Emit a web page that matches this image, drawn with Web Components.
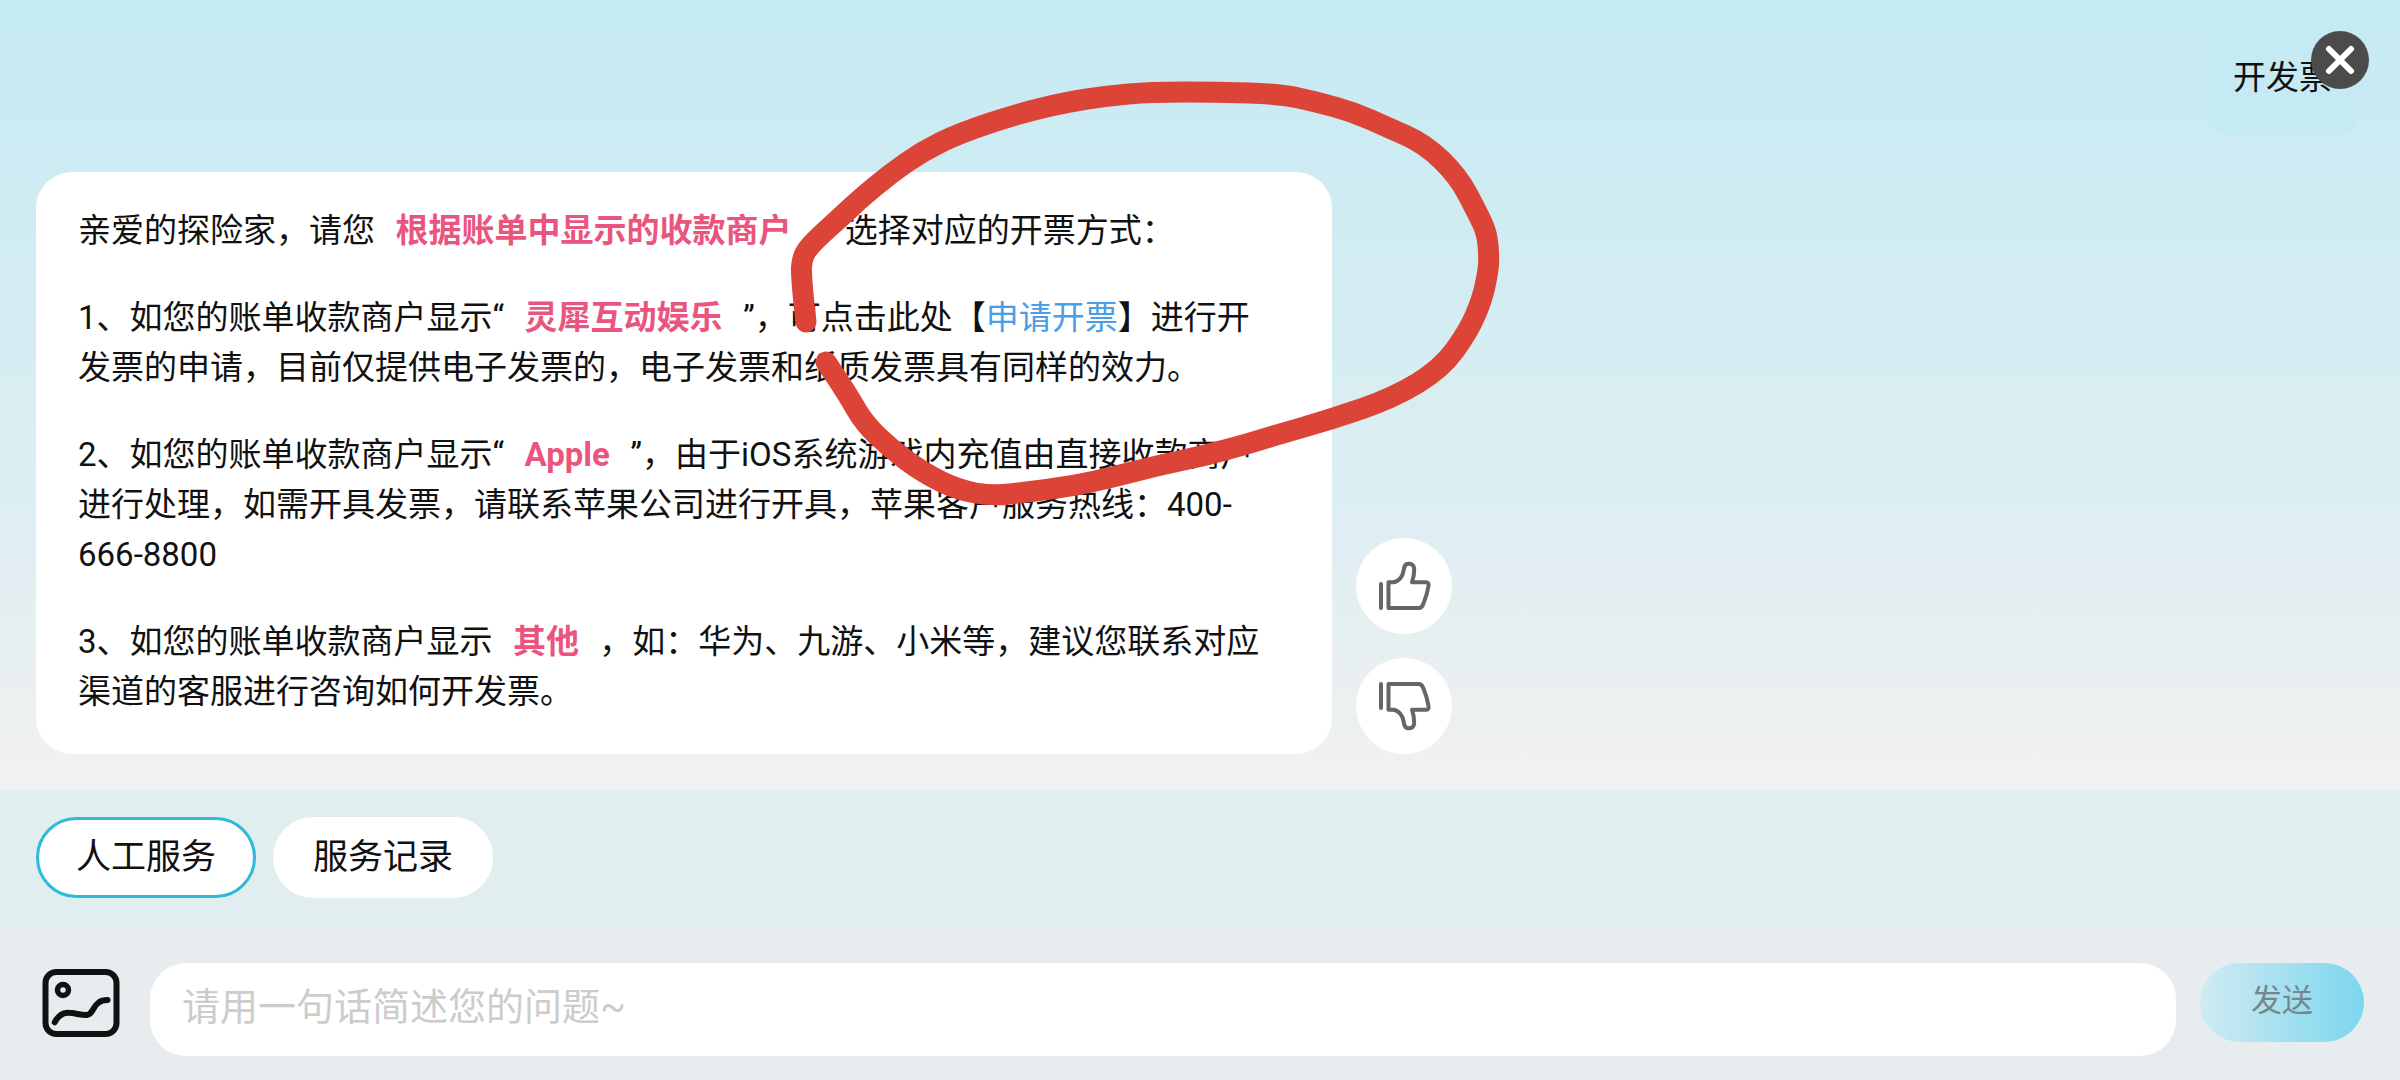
<!DOCTYPE html>
<html lang="zh-CN">
<head>
<meta charset="utf-8">
<meta name="viewport" content="width=device-width, initial-scale=1">
<title>在线客服</title>
<style>
  html, body { margin: 0; min-height: 100%; }
  body {
    font-family: Roboto, "Noto Sans CJK SC", sans-serif;
    font-size: 33px;
    line-height: 50px;
    color: #111;
    background: #e7ecee;
  }
</style>
</head>
<body>
<service-chat></service-chat>
<script>
const define = (name, html, setup) => {
  const template = document.createElement('template');
  template.innerHTML = html.trim();
  customElements.define(name, class extends HTMLElement {
    constructor() {
      super();
      this.attachShadow({ mode: 'open' }).append(template.content.cloneNode(true));
    }
    connectedCallback() { if (setup) setup(this, this.shadowRoot); }
  });
};

define('key-text', `
  <style>:host { display: inline; margin: 0 4px; font-weight: 700; color: #ea5580; }</style><slot></slot>`);

define('user-bubble', `
  <style>
    :host { display: block; align-self: flex-end; padding: 37px 32px 34px 31px; border-radius: 36px; background: #c5eaf3; white-space: nowrap; }
  </style><slot></slot>`);

define('answer-card', `
  <style>
    :host { display: flex; flex-direction: column; gap: 37px; box-sizing: border-box; width: 54vw; padding: 34px 64px 37px 42px; border-radius: 36px; background: #fff; }
    ::slotted(p) { margin: 0; }
  </style><slot></slot>`);

define('rate-button', `
  <style>
    :host { display: block; }
    button { display: block; width: 96px; height: 96px; padding: 0; border: 0; border-radius: 50%; background: #fff; cursor: pointer; }
    svg { display: block; fill: none; stroke: #666; stroke-width: 4; stroke-linecap: round; stroke-linejoin: round; }
    :host([down]) svg { transform: scaleY(-1); }
  </style>
  <button type="button">
    <svg viewBox="0 0 96 96" width="96" height="96" aria-hidden="true">
      <path d="M25 46V70"/>
      <path d="M32.5 44.3V70H63.5Q66 69.500 67.500 65.500Q71 57 72.600 47.500Q72.800 44.300 70 44.300H56Q58.400 37 58.200 30.500C57.500 24.500 49.500 24 48.200 29.500C47.300 33.500 47.500 36.500 44.500 40Q41 44.300 37 44.300Z"/>
    </svg>
  </button>`,
  (host, root) => root.querySelector('button').setAttribute('aria-label', host.getAttribute('label')));

define('quick-chip', `
  <style>
    :host { display: block; }
    button { display: block; height: 81px; padding: 0 37px; border: 3px solid #fff; border-radius: 41px; background: #fff; color: #111; font: inherit; font-size: 35px; line-height: 50px; white-space: nowrap; cursor: pointer; }
    :host([active]) button { border-color: #2fb9da; }
  </style>
  <button type="button"><slot></slot></button>`);

define('quick-bar', `
  <style>
    :host { display: flex; gap: 17px; padding: 27px 36px; background: #e1eeef; }
  </style><slot></slot>`);

define('message-composer', `
  <style>
    :host { display: block; background: #e7ecee; }
    form { display: flex; align-items: flex-start; gap: 24px; margin: 0; padding: 38px 36px 24px; }
    .picture { flex: none; padding: 5px 6px; margin: 0; border: 0; background: none; cursor: pointer; }
    svg { display: block; fill: none; stroke: #111; stroke-width: 6; stroke-linecap: round; }
    .field { flex: 1; display: flex; min-width: 0; }
    input { flex: 1; min-width: 0; box-sizing: border-box; height: 93px; padding: 0 32px 5px; border: 0; border-radius: 36px; background: #fff; color: #111; font: inherit; font-size: 38px; outline: none; }
    input::placeholder { color: #ccc; opacity: 1; }
    .send { flex: none; height: 79px; padding: 0 51px 3px; border: 0; border-radius: 40px; background: linear-gradient(90deg, #d0ebf2, #7cd6ee); color: #76868a; font: inherit; font-size: 31px; cursor: pointer; }
  </style>
  <form onsubmit="return false">
    <button class="picture" type="button" aria-label="图片">
      <svg viewBox="0 0 78 70" width="78" height="70" aria-hidden="true">
        <rect x="3.500" y="4" width="71" height="62" rx="11"/>
        <circle cx="21" cy="22" r="5.500" stroke-width="5.500"/>
        <path d="M12.700 54.300C17 46 22 44.500 27 44.800C33 45 40 47.500 45 47C51 46 51 38 56.500 34.700Q60 32 65.500 32"/>
      </svg>
    </button>
    <label class="field"><input type="text" aria-label="问题" placeholder="请用一句话简述您的问题~"></label>
    <button class="send" type="submit">发送</button>
  </form>`);

define('close-button', `
  <style>
    :host { display: block; }
    button { display: block; width: 58px; height: 58px; padding: 0; border: 0; border-radius: 50%; background: #4b4b4b; cursor: pointer; }
    svg { display: block; }
  </style>
  <button type="button" aria-label="关闭">
    <svg viewBox="0 0 58 58" width="58" height="58" aria-hidden="true">
      <path d="M18 18L40 40M40 18L18 40" stroke="#fff" stroke-width="6" stroke-linecap="round"/>
    </svg>
  </button>`);

define('marker-ring', `
  <style>
    :host { display: block; pointer-events: none; }
    svg { display: block; fill: none; stroke: #dc4437; stroke-width: 21; stroke-linecap: round; stroke-linejoin: round; }
  </style>
  <svg viewBox="780 70 730 450" width="730" height="450" aria-hidden="true">
    <path/>
  </svg>`,
  (host, root) => {
    const points = [[806,322],[801,278],[802,257],[812,243],[843,215],[860,199],[890,174],[923,151],[960,133],[1017,114],[1067,102],[1107,96],[1150,92],[1217,92],[1280,94],[1317,102],[1353,112],[1387,127],[1425,144],[1458,176],[1477,212],[1487,233],[1489,257],[1488,272],[1482,300],[1468,332],[1441,369],[1393,398],[1332,419],[1273,436],[1247,444],[1203,456],[1160,465],[1113,477],[1073,486],[1027,492],[993,496],[958,490],[922,472],[890,448],[864,423],[848,395],[826,362]];
    let d = 'M' + points[0];
    for (let i = 1; i < points.length - 1; i++) {
      const [x, y] = points[i], [u, v] = points[i + 1];
      d += 'Q' + x + ',' + y + ' ' + (x + u) / 2 + ',' + (y + v) / 2;
    }
    root.querySelector('path').setAttribute('d', d + 'L' + points[points.length - 1]);
  });

define('service-chat', `
  <style>
    :host { display: flex; flex-direction: column; position: relative; min-height: 100vh; overflow: hidden; }
    main { flex: 1; display: flex; flex-direction: column; gap: 35px; padding: 16px 36px 36px; background: linear-gradient(180deg, #c5eaf3 0%, #ccebf3 17%, #dbeef2 60%, #e1eef4 69%, #e6eff0 80%, #f1f1f1 98%); }
    .answer { display: flex; align-items: flex-end; gap: 24px; }
    .rates { display: flex; flex-direction: column; gap: 24px; }
    a { color: #4a9de8; text-decoration: none; }
    close-button { position: absolute; top: 31px; right: 31px; }
    marker-ring { position: absolute; top: 70px; left: 780px; }
  </style>
  <main>
    <user-bubble>开发票</user-bubble>
    <div class="answer">
      <answer-card>
        <p>亲爱的探险家，请您&nbsp; <key-text>根据账单中显示的收款商户</key-text>&nbsp; ，选择对应的开票方式：</p>
        <p>1、如您的账单收款商户显示“&nbsp; <key-text>灵犀互动娱乐</key-text>&nbsp; ”，可点击此处【<a href="#">申请开票</a>】进行开发票的申请，目前仅提供电子发票的，电子发票和纸质发票具有同样的效力。</p>
        <p>2、如您的账单收款商户显示“&nbsp; <key-text>Apple</key-text>&nbsp; ”，由于iOS系统游戏内充值由直接收款商户进行处理，如需开具发票，请联系苹果公司进行开具，苹果客户服务热线：400-666-8800</p>
        <p>3、如您的账单收款商户显示&nbsp; <key-text>其他</key-text>&nbsp; ，如：华为、九游、小米等，建议您联系对应渠道的客服进行咨询如何开发票。</p>
      </answer-card>
      <div class="rates">
        <rate-button label="有帮助"></rate-button>
        <rate-button label="没帮助" down></rate-button>
      </div>
    </div>
  </main>
  <quick-bar>
    <quick-chip active>人工服务</quick-chip>
    <quick-chip>服务记录</quick-chip>
  </quick-bar>
  <message-composer></message-composer>
  <marker-ring></marker-ring>
  <close-button></close-button>`);
</script>
</body>
</html>
